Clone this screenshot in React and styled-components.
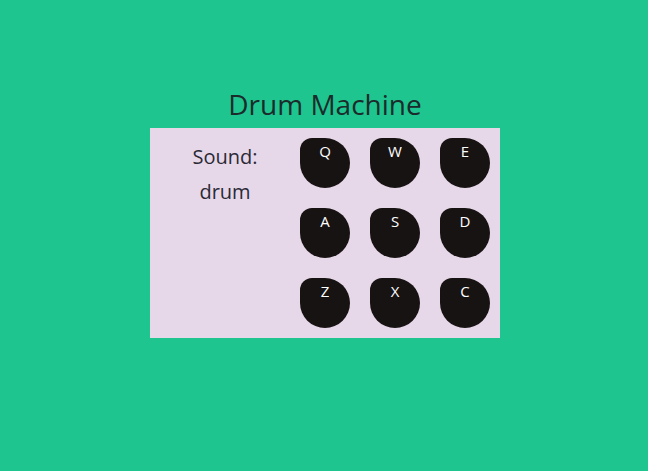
import React from "react";
import styled, { createGlobalStyle } from "styled-components";

const Global = createGlobalStyle`
  html, body { margin: 0; padding: 0; }
  body {
    background: #1fc58f;
    font-family: "Open Sans", "Noto Sans", sans-serif;
    height: 471px;
    overflow: hidden;
  }
`;

const Page = styled.div`
  display: flex;
  flex-direction: column;
  align-items: center;
  padding-top: 84px;
  padding-left: 2px;
`;

const Title = styled.h1`
  margin: 0 0 4px;
  font-size: 28px;
  font-weight: 400;
  line-height: 40px;
  color: #1b2b2b;
`;

const Panel = styled.div`
  width: 350px;
  height: 210px;
  background: #e7d8e9;
  display: flex;
`;

const Display = styled.div`
  width: 150px;
  padding-top: 11px;
  display: flex;
  flex-direction: column;
  align-items: center;
  color: #2a2a36;
  font-size: 20px;
`;

const Line = styled.div`
  line-height: 35px;
`;

const Pads = styled.div`
  display: grid;
  grid-template-columns: repeat(3, 50px);
  grid-auto-rows: 50px;
  column-gap: 20px;
  row-gap: 20px;
  padding-top: 10px;
`;

const Pad = styled.div`
  background: #181313;
  border-radius: 12px 50% 50% 50%;
  color: #fff;
  font-size: 15px;
  text-align: center;
  line-height: 20px;
  padding-top: 3px;
  box-sizing: border-box;
`;

const keys = ["Q", "W", "E", "A", "S", "D", "Z", "X", "C"];

export default function App() {
  return (
    <>
      <Global />
      <Page>
        <Title>Drum Machine</Title>
        <Panel>
          <Display>
            <Line>Sound:</Line>
            <Line>drum</Line>
          </Display>
          <Pads>
            {keys.map((k) => (
              <Pad key={k}>{k}</Pad>
            ))}
          </Pads>
        </Panel>
      </Page>
    </>
  );
}
